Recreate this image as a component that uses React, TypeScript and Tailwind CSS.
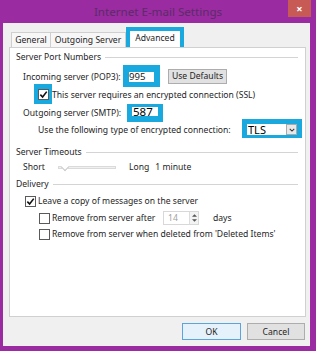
import React from 'react';

const font = { fontFamily: '"Noto Sans", "Open Sans", sans-serif' };

function Check({ checked }: { checked?: boolean }) {
  return (
    <span className="flex h-[11px] w-[11px] shrink-0 items-center justify-center border border-[#5a5a5a] bg-white">
      {checked && (
        <svg viewBox="0 0 10 10" className="h-[9px] w-[9px]">
          <path d="M1.5 5.2 L4 7.8 L8.6 1.8" fill="none" stroke="#111" strokeWidth="1.8" />
        </svg>
      )}
    </span>
  );
}

function GroupTitle({ label, className }: { label: string; className: string }) {
  return (
    <div className={`flex h-[12px] items-center gap-[4px] pr-[7px] ${className}`}>
      <span>{label}</span>
      <span className="h-px flex-1 bg-[#d4d4d4]" />
    </div>
  );
}

export default function App() {
  return (
    <div className="h-[351px] w-[316px] whitespace-nowrap bg-[#9b2ba1] text-[8.6px] leading-[12px] text-[#1e1e1e]" style={font}>
      {/* Title bar */}
      <div className="relative flex h-[23px] items-center justify-center pt-[1px]">
        <span className="text-[11.6px] text-[#5a2c68]">Internet E-mail Settings</span>
        <span className="absolute left-[288px] top-0 flex h-[17px] w-[23px] items-center justify-center bg-[#c85a55] text-[11px] font-bold text-white">
          ×
        </span>
      </div>

      <div className="ml-[3px] flex h-[323px] w-[307px] flex-col bg-[#f0f0f0] pl-[6px] pr-[4px]">
        {/* Tabs */}
        <div className="flex h-[24px] items-end pl-[2px]">
          <div className="flex h-[15px] w-[40px] items-center justify-center border border-b-0 border-[#cfcfcf] bg-[#f7f7f7]">General</div>
          <div className="flex h-[15px] w-[75px] items-center justify-center border border-b-0 border-l-0 border-[#cfcfcf] bg-[#f7f7f7]">Outgoing Server</div>
          <div className="flex h-[20px] w-[58px] items-start justify-center border-[4px] border-b-0 border-[#1aa9df] bg-white pt-[1px]">Advanced</div>
        </div>

        {/* Panel */}
        <div className="flex h-[270px] flex-col border border-[#d0d0d0] bg-white pl-[6px]">
          <GroupTitle label="Server Port Numbers" className="mt-[3px]" />

          <div className="mt-[2px] flex h-[22px] items-center pl-[7px]">
            <span className="w-[100px] pt-[1px]">Incoming server (POP3):</span>
            <span className="flex h-[22px] w-[37px] flex-col bg-[#1aa9df] px-[6px] pt-[7px]">
              <span className="flex h-[10px] items-center bg-white text-[9.6px] text-[#222]">995</span>
            </span>
            <span className="ml-[8px] flex h-[15px] w-[59px] items-center justify-center border border-[#adadad] bg-[#e1e1e1]">Use Defaults</span>
          </div>

          <div className="mt-[-3px] flex h-[20px] items-center">
            <span className="ml-[18px] flex h-[20px] w-[18px] items-center justify-center bg-[#1aa9df] pt-[1px]">
              <Check checked />
            </span>
            <span className="pt-[2px]">This server requires an encrypted connection (SSL)</span>
          </div>

          <div className="flex h-[18px] items-center pl-[7px]">
            <span className="w-[104px]">Outgoing server (SMTP):</span>
            <span className="flex h-[18px] w-[36px] flex-col bg-[#1aa9df] px-[5px] pt-[3px]">
              <span className="flex h-[9px] items-center bg-white pl-[1px] text-[11.5px] text-black">587</span>
            </span>
          </div>

          <div className="mt-[-3px] flex h-[19px] items-center pl-[22px]">
            <span className="w-[204px] pt-[3px]">Use the following type of encrypted connection:</span>
            <span className="flex h-[19px] w-[60px] flex-col bg-[#1aa9df] px-[5px] pt-[5px]">
              <span className="flex h-[11px] items-center justify-between bg-white pl-[1px] text-[11px] text-black">
                TLS
                <span className="flex h-full w-[11px] items-center justify-center border border-[#aaa] bg-[#e8e8e8]">
                  <svg viewBox="0 0 8 5" className="h-[4px] w-[6px]">
                    <path d="M1 1 L4 4 L7 1" fill="none" stroke="#333" strokeWidth="1.4" />
                  </svg>
                </span>
              </span>
            </span>
          </div>

          <GroupTitle label="Server Timeouts" className="mt-[8px]" />
          <div className="mt-[3px] flex h-[12px] items-center pl-[7px]">
            <span className="w-[35px]">Short</span>
            <span className="relative h-[3px] w-[58px] border border-[#dadada] bg-[#f0f0f0]">
              <span className="absolute left-[3px] top-[-3px] h-[6px] w-[6px] rotate-45 border-b border-r border-[#c8c8c8] bg-white" />
            </span>
            <span className="ml-[13px]">Long</span>
            <span className="ml-[6px]">1 minute</span>
          </div>

          <GroupTitle label="Delivery" className="mt-[5px]" />
          <div className="mt-[5px] flex h-[12px] items-center gap-[2px] pl-[9px]">
            <Check checked />
            <span>Leave a copy of messages on the server</span>
          </div>
          <div className="mt-[4px] flex h-[14px] items-center gap-[2px] pl-[23px]">
            <Check />
            <span className="w-[109px]">Remove from server after</span>
            <span className="flex h-[14px] w-[36px] items-center justify-between border border-[#d8d8d8] bg-white pl-[4px] text-[#a0a0a0]">
              14
              <span className="flex h-full w-[9px] flex-col items-center justify-center gap-[2px] border-l border-[#ddd] bg-[#f3f3f3]">
                <svg viewBox="0 0 6 3" className="h-[3px] w-[5px]"><path d="M0 3 L3 0 L6 3Z" fill="#555" /></svg>
                <svg viewBox="0 0 6 3" className="h-[3px] w-[5px]"><path d="M0 0 L3 3 L6 0Z" fill="#555" /></svg>
              </span>
            </span>
            <span className="ml-[12px]">days</span>
          </div>
          <div className="mt-[3px] flex h-[12px] items-center gap-[2px] pl-[23px]">
            <Check />
            <span>Remove from server when deleted from 'Deleted Items'</span>
          </div>
        </div>

        {/* Buttons */}
        <div className="mt-[6px] flex justify-end gap-[6px] pr-[1px]">
          <span className="flex h-[17px] w-[59px] items-center justify-center border border-[#5aa5dc] bg-[#e5f1fb]">OK</span>
          <span className="flex h-[17px] w-[58px] items-center justify-center border border-[#adadad] bg-[#e1e1e1]">Cancel</span>
        </div>
      </div>
    </div>
  );
}
